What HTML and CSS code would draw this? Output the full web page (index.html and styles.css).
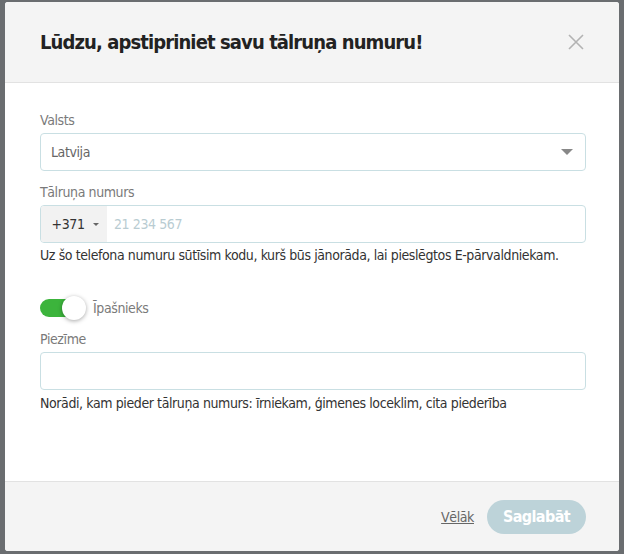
FILE: index.html
```html
<!DOCTYPE html>
<html lang="lv">
<head>
<meta charset="utf-8">
<link rel="stylesheet" href="styles.css">
</head>
<body>
<div class="backdrop">
  <div class="modal">
    <div class="modal-header">
      <h1 class="title">Lūdzu, apstipriniet savu tālruņa numuru!</h1>
      <span class="close" aria-label="Aizvērt">
        <svg width="16" height="16" viewBox="0 0 16 16"><path d="M1 1L15 15M15 1L1 15" stroke="#b3b3b3" stroke-width="1.6" fill="none"/></svg>
      </span>
    </div>
    <div class="modal-body">
      <div class="field">
        <label class="label">Valsts</label>
        <div class="select">
          <span class="select-value">Latvija</span>
          <span class="caret"></span>
        </div>
      </div>
      <div class="field">
        <label class="label">Tālruņa numurs</label>
        <div class="phone">
          <span class="prefix"><span>+371</span><span class="mini-caret"></span></span>
          <span class="placeholder">21 234 567</span>
        </div>
        <p class="help">Uz šo telefona numuru sūtīsim kodu, kurš būs jānorāda, lai pieslēgtos E-pārvaldniekam.</p>
      </div>
      <div class="toggle-row">
        <span class="toggle"><span class="knob"></span></span>
        <span class="toggle-label">Īpašnieks</span>
      </div>
      <div class="field">
        <label class="label">Piezīme</label>
        <div class="input"></div>
        <p class="help help-last">Norādi, kam pieder tālruņa numurs: īrniekam, ģimenes loceklim, cita piederība</p>
      </div>
    </div>
    <div class="modal-footer">
      <a class="later" href="#">Vēlāk</a>
      <button class="save">Saglabāt</button>
    </div>
  </div>
</div>
</body>
</html>
```

FILE: styles.css
```css
* { box-sizing: border-box; }
html, body { margin: 0; padding: 0; }
body {
  font-family: "DejaVu Sans Condensed", "DejaVu Sans", sans-serif;
  font-stretch: condensed;
  letter-spacing: -0.4px;
  width: 624px;
  height: 554px;
  overflow: hidden;
}
.backdrop {
  width: 624px;
  height: 554px;
  background: #6a6d70;
  padding: 2px 5px 3px 5px;
}
.modal {
  width: 614px;
  height: 549px;
  background: #fff;
  border-radius: 3px;
  display: flex;
  flex-direction: column;
  overflow: hidden;
}
.modal-header {
  height: 81px;
  background: #f4f4f4;
  border-bottom: 1px solid #e2e2e2;
  display: flex;
  align-items: center;
  justify-content: space-between;
  padding: 0 35px 0 35px;
  flex-shrink: 0;
}
.title {
  margin: 0;
  font-size: 20px;
  font-weight: bold;
  color: #222;
  letter-spacing: -0.9px;
}
.close { display: flex; }
.modal-body {
  flex: 1;
  padding: 27px 33px 0 35px;
}
.field { display: flex; flex-direction: column; }
.label {
  font-size: 14px;
  color: #7a7a7a;
  line-height: 20px;
  margin-bottom: 3px;
}
.select, .phone, .input {
  height: 38px;
  border: 1px solid #c9dfe3;
  border-radius: 4px;
  display: flex;
  align-items: center;
}
.select { padding: 0 12px 0 10px; justify-content: space-between; margin-bottom: 11px; }
.select-value { font-size: 14px; color: #666; }
.caret {
  width: 0; height: 0;
  border-left: 6px solid transparent;
  border-right: 6px solid transparent;
  border-top: 6px solid #888;
}
.phone { overflow: hidden; }
.prefix {
  background: #f2f2f2;
  height: 100%;
  width: 66px;
  display: flex;
  align-items: center;
  justify-content: center;
  gap: 8px;
  font-size: 14px;
  color: #333;
  padding-left: 2px;
  flex-shrink: 0;
}
.mini-caret {
  width: 0; height: 0;
  border-left: 3px solid transparent;
  border-right: 3px solid transparent;
  border-top: 3px solid #666;
}
.placeholder { font-size: 14px; color: #b9ccd2; padding-left: 7px; }
.help {
  margin: 2px 0 0 0;
  font-size: 14px;
  line-height: 20px;
  color: #333;
}
.help-last { margin-top: 3px; }
.toggle-row {
  display: flex;
  align-items: center;
  margin: 34px 0 12px 0;
  gap: 9px;
}
.toggle {
  width: 44px;
  height: 18px;
  background: #3cb43c;
  border-radius: 9px;
  display: flex;
  align-items: center;
  justify-content: flex-end;
}
.knob {
  width: 24px;
  height: 24px;
  border-radius: 50%;
  background: #fff;
  box-shadow: 0 1px 4px rgba(0,0,0,0.35);
  margin-right: -2px;
}
.toggle-label { font-size: 14px; color: #7a7a7a; }
.modal-footer {
  height: 70px;
  background: #f4f4f4;
  border-top: 1px solid #e2e2e2;
  display: flex;
  align-items: center;
  justify-content: flex-end;
  gap: 13px;
  padding: 0 33px 0 0;
  flex-shrink: 0;
}
.later {
  font-size: 14px;
  color: #666;
  text-decoration: underline;
}
.save {
  font-family: inherit;
  letter-spacing: -0.6px;
  width: 99px;
  height: 34px;
  border: none;
  border-radius: 17px;
  background: #bdd3d9;
  color: #fff;
  font-size: 16px;
  font-weight: bold;
}
```
